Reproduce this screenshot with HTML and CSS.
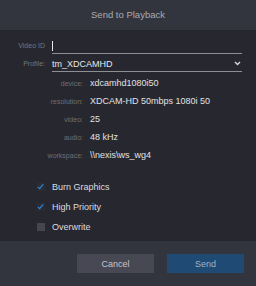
FILE: index.html
```html
<!DOCTYPE html>
<html lang="en">
<head>
<meta charset="UTF-8" />
<title>Send to Playback</title>
<link rel="stylesheet" href="styles.css">
</head>
<body>
<div class="dialog">
  <div class="dialog-header">Send to Playback</div>

  <div class="dialog-body">
    <div class="field">
      <label class="field-label">Video ID</label>
      <div class="field-input"><span class="caret"></span></div>
    </div>
    <div class="field">
      <label class="field-label">Profile:</label>
      <div class="field-input field-select">
        <span>tm_XDCAMHD</span>
        <svg class="chevron" width="7" height="5" viewBox="0 0 7 5"><path d="M1 1 L3.5 3.5 L6 1" fill="none" stroke="#d8d8d8" stroke-width="1.4"/></svg>
      </div>
    </div>

    <div class="details">
      <div class="detail"><span class="detail-label">device:</span><span class="detail-value">xdcamhd1080i50</span></div>
      <div class="detail"><span class="detail-label">resolution:</span><span class="detail-value">XDCAM-HD 50mbps 1080i 50</span></div>
      <div class="detail"><span class="detail-label">video:</span><span class="detail-value">25</span></div>
      <div class="detail"><span class="detail-label">audio:</span><span class="detail-value">48 kHz</span></div>
      <div class="detail"><span class="detail-label">workspace:</span><span class="detail-value">\\nexis\ws_wg4</span></div>
    </div>

    <div class="options">
      <div class="option"><span class="check checked"></span>Burn Graphics</div>
      <div class="option"><span class="check checked"></span>High Priority</div>
      <div class="option"><span class="check"></span>Overwrite</div>
    </div>
  </div>

  <div class="dialog-footer">
    <button class="btn btn-cancel">Cancel</button>
    <button class="btn btn-send">Send</button>
  </div>
</div>
</body>
</html>
```

FILE: styles.css
```css
body {
  margin: 0;
  background: #27282f;
  font-family: "Liberation Sans", Arial, sans-serif;
}

.dialog {
  width: 256px;
  height: 286px;
  display: flex;
  flex-direction: column;
  background: #27282f;
}

/* Header */
.dialog-header {
  height: 30px;
  line-height: 30px;
  text-align: center;
  font-size: 9.5px;
  color: #a9aab0;
  background: #33353e;
  border-bottom: 1px solid #24252b;
}

.dialog-body {
  flex: 1;
  padding-top: 7px;
}

/* Video ID / Profile */
.field {
  display: flex;
  align-items: stretch;
  height: 16px;
  margin-bottom: 2px;
}

.field-label {
  width: 45px;
  margin-right: 7px;
  text-align: right;
  font-size: 7px;
  line-height: 16px;
  color: #74757c;
}

.field-input {
  width: 190px;
  border-bottom: 1px solid #8e8f95;
  box-sizing: border-box;
  display: flex;
  align-items: center;
  font-size: 9px;
  color: #e6e6e8;
}

.caret {
  width: 1px;
  height: 10px;
  background: #e6e6e8;
}

.field-select {
  justify-content: space-between;
}

.chevron {
  margin-right: 1px;
}

/* Profile details */
.details {
  margin-top: 1px;
}

.detail {
  display: flex;
  align-items: center;
  height: 18px;
}

.detail-label {
  width: 83px;
  margin-right: 7px;
  text-align: right;
  font-size: 7px;
  color: #6e6f76;
}

.detail-value {
  font-size: 9px;
  color: #e2e2e4;
}

/* Checkboxes */
.options {
  margin-top: 13px;
}

.option {
  display: flex;
  align-items: center;
  height: 20px;
  padding-left: 37px;
  font-size: 9px;
  color: #dcdce0;
}

.check {
  width: 8px;
  height: 8px;
  margin-right: 7px;
  background: #45464f;
  position: relative;
}

.check.checked {
  background: #2b2c34;
}

.check.checked::after {
  content: "";
  position: absolute;
  left: 2px;
  top: 0;
  width: 2px;
  height: 5px;
  border-right: 1.5px solid #2f8de4;
  border-bottom: 1.5px solid #2f8de4;
  transform: rotate(40deg);
}

/* Footer */
.dialog-footer {
  height: 45px;
  box-sizing: border-box;
  padding: 13px 12px 0 0;
  background: #33353e;
  display: flex;
  justify-content: flex-end;
  gap: 13px;
}

.btn {
  width: 77px;
  height: 19px;
  border: none;
  border-radius: 0;
  font-family: inherit;
  font-size: 9px;
  cursor: pointer;
}

.btn-cancel {
  background: #474853;
  color: #c4c5ca;
}

.btn-send {
  background: #1f4a74;
  color: #9fb2c6;
}
```
